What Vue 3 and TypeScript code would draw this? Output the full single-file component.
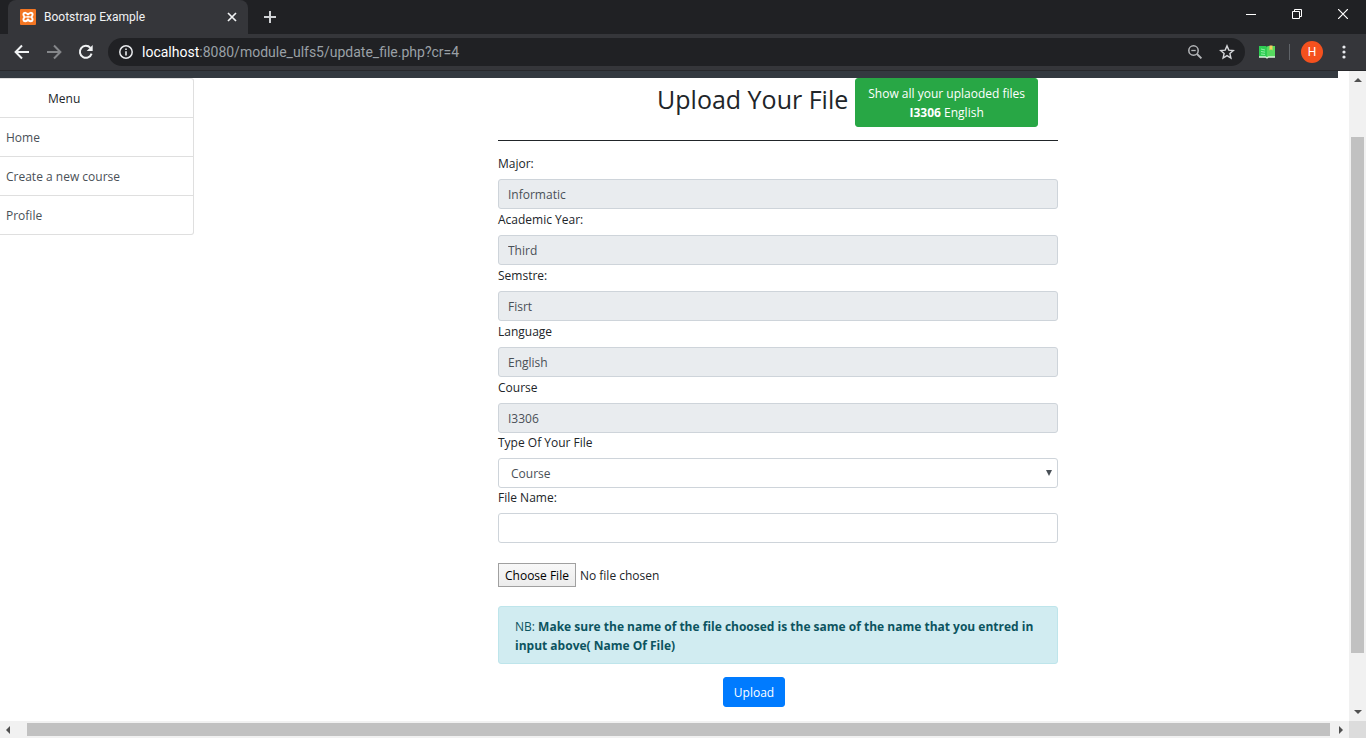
<script setup lang="ts">
import { ref } from 'vue'

interface Field {
  id: string
  label: string
  value: string
}

const menuItems: string[] = ['Home', 'Create a new course', 'Profile']

const fields: Field[] = [
  { id: 'major', label: 'Major:', value: 'Informatic' },
  { id: 'year', label: 'Academic Year:', value: 'Third' },
  { id: 'semester', label: 'Semstre:', value: 'Fisrt' },
  { id: 'language', label: 'Language', value: 'English' },
  { id: 'course', label: 'Course', value: 'I3306' },
]

const fileType = ref('Course')
const fileName = ref('')
</script>

<template>
  <div class="browser">
    <header class="chrome">
      <div class="tabstrip">
        <div class="tab">
          <svg class="favicon" width="16" height="16" viewBox="0 0 16 16" aria-hidden="true">
            <rect width="16" height="16" rx="1" fill="#f37623" />
            <path d="M8 6 C7.4 3.4 3.6 3 3.4 5.4 C3.4 6.8 4 7.4 4.8 8 C4 8.6 3.2 9.4 3.4 10.8 C3.8 12.8 6.6 12.6 8 10.6 C9.4 12.6 12.2 12.8 12.6 10.8 C12.8 9.4 12 8.6 11.2 8 C12 7.4 12.6 6.8 12.6 5.4 C12.4 3 8.6 3.4 8 6 Z" fill="none" stroke="#fff" stroke-width="1.9" />
            <path d="M6.2 7.9 H9.8" stroke="#fff" stroke-width="1.6" />
          </svg>
          <span class="tab-title">Bootstrap Example</span>
          <button class="icon-btn tab-close" type="button" aria-label="Close tab">
            <svg width="10" height="10" viewBox="0 0 10 10"><path d="M1 1 L9 9 M9 1 L1 9" stroke="#f1f3f4" stroke-width="1.7" /></svg>
          </button>
        </div>
        <button class="icon-btn new-tab" type="button" aria-label="New tab">
          <svg width="12" height="12" viewBox="0 0 12 12"><path d="M6 0 V12 M0 6 H12" stroke="#d0d2d5" stroke-width="2" /></svg>
        </button>
        <div class="window-controls">
          <button class="icon-btn" type="button" aria-label="Minimize">
            <svg width="10" height="10" viewBox="0 0 10 10"><path d="M0 5.5 H10" stroke="#fff" /></svg>
          </button>
          <button class="icon-btn" type="button" aria-label="Restore">
            <svg width="10" height="10" viewBox="0 0 10 10"><path d="M0.5 2.5 H7.5 V9.5 H0.5 Z M2.5 2.5 V0.5 H9.5 V7.5 H7.5" fill="none" stroke="#fff" /></svg>
          </button>
          <button class="icon-btn" type="button" aria-label="Close">
            <svg width="10" height="10" viewBox="0 0 10 10"><path d="M0 0 L10 10 M10 0 L0 10" stroke="#fff" stroke-width="1.2" /></svg>
          </button>
        </div>
      </div>

      <div class="toolbar">
        <button class="icon-btn nav-btn" type="button" aria-label="Back">
          <svg width="16" height="16" viewBox="0 0 16 16"><path d="M15 8 H2 M8 1.5 L1.6 8 L8 14.5" fill="none" stroke="#f1f3f4" stroke-width="2" /></svg>
        </button>
        <button class="icon-btn nav-btn" type="button" aria-label="Forward">
          <svg width="16" height="16" viewBox="0 0 16 16"><path d="M1 8 H14 M8 1.5 L14.4 8 L8 14.5" fill="none" stroke="#85878a" stroke-width="2" /></svg>
        </button>
        <button class="icon-btn nav-btn" type="button" aria-label="Reload">
          <svg width="16" height="16" viewBox="0 0 16 16"><path d="M13.6 9.6 A6 6 0 1 1 12.4 3.8" fill="none" stroke="#f1f3f4" stroke-width="2" /><path d="M14.7 1 V7 H8.7 Z" fill="#f1f3f4" /></svg>
        </button>
        <div class="omnibox">
          <svg width="16" height="16" viewBox="0 0 16 16" aria-hidden="true">
            <circle cx="8" cy="8" r="6.2" fill="none" stroke="#e8eaed" stroke-width="1.5" />
            <path d="M8 7.2 V11.4 M8 4.4 V6" stroke="#e8eaed" stroke-width="1.6" />
          </svg>
          <span class="url"><span class="host">localhost</span>:8080/module_ulfs5/update_file.php?cr=4</span>
          <button class="icon-btn omni-btn" type="button" aria-label="Zoom">
            <svg width="16" height="16" viewBox="0 0 16 16"><circle cx="6.5" cy="6.5" r="4.7" fill="none" stroke="#b4b6b9" stroke-width="1.5" /><path d="M4.3 6.5 H8.7" stroke="#b4b6b9" stroke-width="1.3" /><path d="M10 10 L14.4 14.4" stroke="#b4b6b9" stroke-width="1.9" /></svg>
          </button>
          <button class="icon-btn omni-btn" type="button" aria-label="Bookmark this page">
            <svg width="16" height="16" viewBox="0 0 16 16"><path d="M8 1.9 L9.8 6.1 L14.3 6.5 L10.9 9.5 L11.9 14 L8 11.6 L4.1 14 L5.1 9.5 L1.7 6.5 L6.2 6.1 Z" fill="none" stroke="#d5d7da" stroke-width="1.4" /></svg>
          </button>
        </div>
        <button class="icon-btn extension" type="button" aria-label="Reading extension">
          <svg width="16" height="14" viewBox="0 0 16 14">
            <path d="M0 1 H7 L8 2 L9 1 H16 V12 H9 L8 13 L7 12 H0 Z" fill="#2ecc52" />
            <path d="M8 2 L9 1 H16 V12 H8 Z" fill="#56d95f" />
            <path d="M0 12 H6.5 L8 13 L9.5 12 H16" fill="none" stroke="#d9f5dc" stroke-width="1.4" />
            <path d="M2 4 L6 5 M2 6.5 L6 7.2 M2 9 L6 9.4" stroke="#8ff0a4" />
            <path d="M10.5 0.5 H13.5 V5.5 L12 4.3 L10.5 5.5 Z" fill="#f5cf5c" />
          </svg>
        </button>
        <span class="divider"></span>
        <button class="avatar" type="button" aria-label="Profile H">H</button>
        <button class="icon-btn more" type="button" aria-label="More">
          <svg width="4" height="14" viewBox="0 0 4 14"><circle cx="2" cy="2" r="1.6" fill="#e8eaed" /><circle cx="2" cy="7" r="1.6" fill="#e8eaed" /><circle cx="2" cy="12" r="1.6" fill="#e8eaed" /></svg>
        </button>
      </div>
    </header>

    <div class="viewport">
      <div class="page">
        <div class="navbar"></div>
        <div class="columns">
          <nav class="menu" aria-label="Menu">
            <div class="menu-head">Menu</div>
            <a v-for="item in menuItems" :key="item" class="menu-link" href="#">{{ item }}</a>
          </nav>

          <main class="main">
            <div class="heading">
              <h2>Upload Your File</h2>
              <button class="btn show-all" type="button">Show all your uplaoded files<br /><b>I3306</b> English</button>
            </div>
            <form class="form" @submit.prevent>
              <hr />
              <div v-for="field in fields" :key="field.id" class="field readonly">
                <label :for="field.id">{{ field.label }}</label>
                <input :id="field.id" class="control" type="text" :value="field.value" readonly />
              </div>
              <div class="field">
                <label for="file-type">Type Of Your File</label>
                <div class="select-wrap">
                  <select id="file-type" v-model="fileType" class="control">
                    <option>Course</option>
                  </select>
                  <svg class="caret" width="6" height="6" viewBox="0 0 6 6" aria-hidden="true"><path d="M0 0 H6 L3 6 Z" fill="#495057" /></svg>
                </div>
              </div>
              <div class="field">
                <label for="file-name">File Name:</label>
                <input id="file-name" v-model="fileName" class="control" type="text" />
              </div>
              <input class="file" type="file" aria-label="File to upload" />
              <div class="alert" role="alert">
                NB: <strong>Make sure the name of the file choosed is the same of the name that you entred in input above( Name Of File)</strong>
              </div>
              <div class="actions">
                <button class="btn upload" type="submit">Upload</button>
              </div>
            </form>
          </main>
        </div>
      </div>

      <div class="scroll vertical">
        <svg width="8" height="4" viewBox="0 0 8 4"><path d="M0 4 L4 0 L8 4 Z" fill="#505050" /></svg>
        <div class="track"><div class="thumb"></div></div>
        <svg width="8" height="4" viewBox="0 0 8 4"><path d="M0 0 L4 4 L8 0 Z" fill="#505050" /></svg>
      </div>
      <div class="scroll horizontal">
        <svg width="4" height="8" viewBox="0 0 4 8"><path d="M4 0 L0 4 L4 8 Z" fill="#505050" /></svg>
        <div class="track"><div class="thumb"></div></div>
        <svg width="4" height="8" viewBox="0 0 4 8"><path d="M0 0 L4 4 L0 8 Z" fill="#505050" /></svg>
      </div>
      <div class="corner"></div>
    </div>
  </div>
</template>

<style>
body {
  margin: 0;
  overflow: hidden;
}
</style>

<style scoped>
* {
  box-sizing: border-box;
}

.browser {
  display: flex;
  flex-direction: column;
  height: 100vh;
  font-family: "Open Sans", "Noto Sans", sans-serif;
  font-size: 12px;
  line-height: 19px;
  color: #212529;
  background: #fff;
}

svg {
  display: block;
  flex: none;
}

.icon-btn {
  display: flex;
  align-items: center;
  justify-content: center;
  padding: 0;
  border: 0;
  background: none;
}

/* Tab strip and toolbar */
.chrome {
  flex: none;
  background: #35363a;
  border-bottom: 1px solid #28292c;
  font-family: Roboto, sans-serif;
}

.tabstrip {
  display: flex;
  height: 34px;
  padding-left: 8px;
  background: #202124;
}

.tab {
  display: flex;
  align-items: center;
  width: 240px;
  padding: 0 8px 0 12px;
  border-radius: 8px 8px 0 0;
  background: #35363a;
  color: #f1f3f4;
}

.tab-title {
  flex: 1;
  margin-left: 8px;
  font-size: 12px;
}

.tab-close {
  width: 16px;
  height: 16px;
}

.new-tab {
  width: 44px;
}

.window-controls {
  display: flex;
  margin-left: auto;
}

.window-controls .icon-btn {
  width: 46px;
  height: 28px;
}

.toolbar {
  display: flex;
  align-items: center;
  height: 36px;
  padding: 0 12px 0 6px;
}

.nav-btn {
  width: 32px;
  height: 28px;
}

.omnibox {
  display: flex;
  flex: 1;
  align-items: center;
  height: 28px;
  margin-left: 6px;
  padding: 0 2px 0 10px;
  border-radius: 14px;
  background: #202124;
}

.url {
  flex: 1;
  margin-left: 8px;
  font-size: 14px;
  color: #9aa0a6;
}

.host {
  color: #fff;
}

.omni-btn {
  width: 32px;
  height: 28px;
}

.extension {
  width: 44px;
  height: 28px;
}

.divider {
  width: 1px;
  height: 16px;
  background: #5f6368;
}

.avatar {
  width: 22px;
  height: 22px;
  margin-left: 11px;
  padding: 0;
  border: 0;
  border-radius: 50%;
  background: #f4511e;
  color: #fff;
  font: 12px/22px Roboto, sans-serif;
}

.more {
  width: 20px;
  height: 28px;
  margin-left: 11px;
}

/* Page area with its scrollbars */
.viewport {
  display: grid;
  flex: 1;
  grid-template-columns: minmax(0, 1fr) 17px;
  grid-template-rows: minmax(0, 1fr) 17px;
  min-height: 0;
}

.page {
  overflow: hidden;
  padding-right: 11px;
}

.navbar {
  height: 7px;
  background: #343a40;
}

.columns {
  display: flex;
  align-items: flex-start;
}

.menu {
  flex: none;
  width: 194px;
  border: 1px solid #dfdfdf;
  border-left: 0;
  border-radius: 0 3px 3px 0;
}

.menu-head {
  padding: 10px 48px 9px;
}

.menu-link {
  display: block;
  padding: 10px 6px 9px;
  border-top: 1px solid #dfdfdf;
  color: #495057;
  text-decoration: none;
}

.main {
  flex: 1;
  margin-left: 24px;
}

.form,
.heading {
  width: 50%;
  margin: 0 auto;
}

.heading {
  display: flex;
  align-items: flex-start;
  justify-content: flex-end;
  padding-right: 20px;
  white-space: nowrap;
}

h2 {
  margin: 6px 7px 0 0;
  font-size: 25px;
  font-weight: 500;
  line-height: 31px;
}

.btn {
  border: 1px solid;
  border-radius: 3px;
  color: #fff;
  font: inherit;
}

.show-all {
  height: 49px;
  padding: 0 12px;
  border-color: #28a745;
  background: #28a745;
}

hr {
  height: 1px;
  margin: 13px 0;
  border: 0;
  background: #212529;
}

.field label {
  display: block;
  height: 25px;
}

.readonly + .readonly {
  margin-top: 1px;
}

.control {
  display: block;
  width: 100%;
  height: 30px;
  padding: 0 9px;
  border: 1px solid #ced4da;
  border-radius: 3px;
  outline: 0;
  background: #fff;
  color: #495057;
  font: inherit;
  appearance: none;
}

.control[readonly] {
  background: #e9ecef;
}

select.control {
  padding: 0 12px;
}

.select-wrap {
  position: relative;
}

.caret {
  position: absolute;
  top: 12px;
  right: 6px;
}

.file {
  display: block;
  width: 100%;
  height: 24px;
  margin-top: 20px;
  font: inherit;
  color: #212529;
}

.file::file-selector-button {
  height: 24px;
  margin: 0 4px 0 0;
  padding: 0 6px;
  border: 1px solid #a0a0a0;
  border-radius: 0;
  background: linear-gradient(#f8f8f8, #ececec);
  color: #000;
  font: inherit;
}

.alert {
  margin-top: 19px;
  padding: 10px 16px 8px;
  border: 1px solid #bee5eb;
  border-radius: 3px;
  background: #d1ecf1;
  color: #0c5460;
}

.actions {
  display: flex;
  justify-content: center;
  margin-top: 13px;
  padding-right: 48px;
}

.upload {
  height: 30px;
  padding: 1px 10px 0;
  border-color: #007bff;
  background: #007bff;
}

.scroll {
  display: flex;
  align-items: center;
  background: #f1f1f1;
}

.track {
  flex: 1;
  display: flex;
}

.thumb {
  background: #c1c1c1;
}

.vertical {
  flex-direction: column;
  padding: 7px 0;
}

.vertical .track {
  width: 13px;
  flex-direction: column;
  padding: 55px 0 57px;
}

.vertical .thumb {
  flex: 1;
}

.horizontal {
  padding: 0 6px;
}

.horizontal .track {
  height: 13px;
  padding: 0 9px 0 17px;
}

.horizontal .thumb {
  flex: 1;
}

.corner {
  background: #dcdcdc;
}
</style>
